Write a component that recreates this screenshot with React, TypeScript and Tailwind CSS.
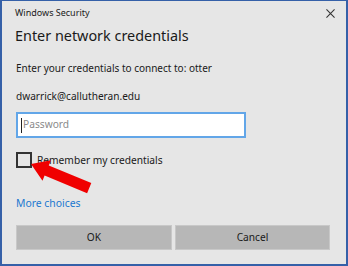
import React from "react";

export default function App() {
  return (
    <div
      className="relative w-[348px] h-[266px] bg-[#e6e6e6] border-[#3560a8] border-x-2 border-b-2 border-t overflow-hidden text-[#1a1a1a]"
      style={{ fontFamily: '"Noto Sans", "Open Sans", sans-serif' }}
    >
      <div className="flex items-center justify-between pl-[13px] pr-[11px] h-[23px]">
        <span className="text-[9px] leading-none">Windows Security</span>
        <svg width="9" height="9" viewBox="0 0 10 10" className="mt-[1px]">
          <path d="M0.5 0.5 L9.5 9.5 M9.5 0.5 L0.5 9.5" stroke="#333" strokeWidth="1.2" />
        </svg>
      </div>
      <div className="pl-[13px] mt-[2px] text-[14.4px] leading-[20px] font-normal">Enter network credentials</div>
      <div className="pl-[14px] mt-[15px] text-[10px] leading-[14px]">Enter your credentials to connect to: otter</div>
      <div className="pl-[14px] mt-[14px] text-[10.1px] leading-[14px]">dwarrick@callutheran.edu</div>
      <div className="ml-[14px] mt-[9px] w-[230px] h-[26px] bg-white border-2 border-[#62a6e8] flex items-center pl-[3px]">
        <span className="w-px h-[15px] bg-[#222]" />
        <span className="text-[10.2px] text-[#8a8a8a] ml-[1px]">Password</span>
      </div>
      <div className="ml-[14px] mt-[14px] flex items-center">
        <div className="w-[16px] h-[16px] border-2 border-[#333]" />
        <span className="ml-[5px] text-[10.2px] leading-[14px]">Remember my credentials</span>
      </div>
      <div className="pl-[14px] mt-[28px] text-[10.4px] leading-[14px] text-[#1b78d0]">More choices</div>
      <div className="ml-[14px] mt-[15px] flex gap-[3px]">
        <div className="w-[156px] h-[25px] bg-[#b7b7b7] border border-[#c8c8c8] flex items-center justify-center text-[10.2px]">OK</div>
        <div className="w-[155px] h-[25px] bg-[#b7b7b7] border border-[#c8c8c8] flex items-center justify-center text-[10.2px]">Cancel</div>
      </div>
      <svg className="absolute left-0 top-0 pointer-events-none" width="348" height="266" viewBox="0 0 348 266">
        <polygon
          points="29,163 48.9,159.3 46.8,164.4 89.3,182 85.1,192.2 42.6,174.6 40.5,179.7"
          fill="#f00000"
        />
      </svg>
    </div>
  );
}
